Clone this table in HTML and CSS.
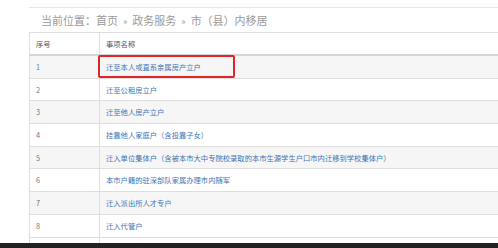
FILE: index.html
```html
<!DOCTYPE html>
<html lang="zh-CN">
<head>
<meta charset="utf-8">
<title>市（县）内移居</title>
<link rel="stylesheet" href="styles.css">
</head>
<body>
<div class="page">
  <div class="viewport">
    <div class="panel">
      <div class="crumb">当前位置：首页<span class="sep">»</span>政务服务<span class="sep">»</span>市（县）内移居</div>
      <table class="list">
        <colgroup><col class="col-num"><col class="col-name"></colgroup>
        <thead>
          <tr><th>序号</th><th>事项名称</th></tr>
        </thead>
        <tbody>
          <tr class="alt"><td>1</td><td class="marked"><a href="#">迁至本人或直系亲属房产立户</a></td></tr>
          <tr><td>2</td><td><a href="#">迁至公租房立户</a></td></tr>
          <tr class="alt"><td>3</td><td><a href="#">迁至他人房产立户</a></td></tr>
          <tr><td>4</td><td><a href="#">挂靠他人家庭户（含投靠子女）</a></td></tr>
          <tr class="alt"><td>5</td><td><a href="#">迁入单位集体户（含被本市大中专院校录取的本市生源学生户口市内迁移到学校集体户）</a></td></tr>
          <tr><td>6</td><td><a href="#">本市户籍的驻深部队家属办理市内随军</a></td></tr>
          <tr class="alt"><td>7</td><td><a href="#">迁入派出所人才专户</a></td></tr>
          <tr><td>8</td><td><a href="#">迁入代管户</a></td></tr>
          <tr><td></td><td></td></tr>
        </tbody>
      </table>
    </div>
  </div>
  <div class="bottom-bar"></div>
</div>
</body>
</html>
```

FILE: styles.css
```css
html, body {
  margin: 0;
  padding: 0;
  background: #ffffff;
}

body {
  font-family: "Noto Sans CJK SC", "Noto Sans", "Liberation Sans", sans-serif;
}

.page {
  width: 498px;
  height: 248px;
  display: flex;
  flex-direction: column;
  overflow: hidden;
}

.viewport {
  flex: 1;
  min-height: 0;
  overflow: hidden;
  display: flex;
  align-items: flex-start;
  padding: 7px 0 0 29px;
}

.panel {
  flex: 0 0 600px;
  width: 600px;
  border-top: 1px solid #e6e6e6;
}

.crumb {
  height: 24px;
  line-height: 24px;
  padding-left: 12px;
  font-size: 11px;
  color: #9a9a9a;
  white-space: nowrap;
}

.crumb .sep {
  margin: 0 5px;
  font-size: 9px;
}

.list {
  width: 600px;
  border-collapse: collapse;
  font-size: 7.3px;
  table-layout: fixed;
}

.col-num {
  width: 70px;
}

.col-name {
  width: 530px;
}

.list th,
.list td {
  border: 1px solid #dedede;
  padding: 0 0 0 6px;
  text-align: left;
  white-space: nowrap;
  line-height: 10px;
  color: #777777;
}

.list th {
  height: 21px;
  font-weight: normal;
  color: #555555;
  border-bottom: 2px solid #d6d6d6;
}

.list td {
  height: 21.7px;
}

.list tr.alt td {
  background: #f6f6f6;
}

.list a {
  color: #3f74b4;
  text-decoration: none;
}

.list td.marked {
  position: relative;
}

.list td.marked::after {
  content: "";
  position: absolute;
  left: -2px;
  top: -1px;
  width: 133px;
  height: 19px;
  border: 2px solid #e0262b;
  border-radius: 2px;
}

.bottom-bar {
  height: 5px;
  background: #222222;
}
```
